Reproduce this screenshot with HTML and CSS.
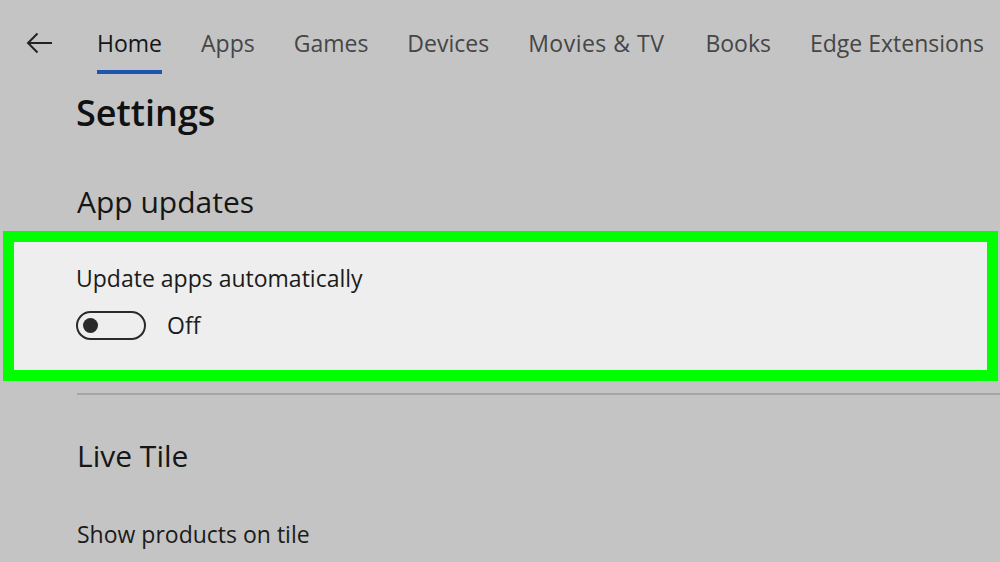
FILE: index.html
```html
<!DOCTYPE html>
<html>
<head>
<meta charset="utf-8">
<link rel="stylesheet" href="styles.css">
</head>
<body>
<nav class="topnav">
  <span class="back">
    <svg width="27" height="22" viewBox="0 0 27 22"><path d="M26 11H2M11.5 1.5L2 11l9.5 9.5" fill="none" stroke="#222" stroke-width="2"/></svg>
  </span>
  <a class="tab active">Home</a>
  <a class="tab">Apps</a>
  <a class="tab">Games</a>
  <a class="tab">Devices</a>
  <a class="tab wide">Movies &amp; TV</a>
  <a class="tab">Books</a>
  <a class="tab">Edge Extensions</a>
</nav>
<main class="content">
  <h1 class="title">Settings</h1>
  <h2 class="section">App updates</h2>
  <div class="highlight">
    <div class="label">Update apps automatically</div>
    <div class="toggle-row">
      <span class="toggle"><span class="knob"></span></span>
      <span class="state">Off</span>
    </div>
  </div>
  <hr class="divider">
  <h2 class="section live">Live Tile</h2>
  <div class="label plain">Show products on tile</div>
</main>
</body>
</html>
```
FILE: styles.css
```css
html, body { margin: 0; padding: 0; }
body {
  width: 1000px;
  height: 562px;
  overflow: hidden;
  background: #c4c4c4;
  font-family: "Open Sans", "Noto Sans", sans-serif;
  color: #1b1b1b;
}
.topnav {
  display: flex;
  align-items: flex-start;
  height: 89px;
  padding: 27px 0 0 26px;
  box-sizing: border-box;
}
.back { display: flex; width: 27px; margin: 5px 44px 0 0; }
.tab {
  position: relative;
  font-size: 23px;
  line-height: 32px;
  color: #464646;
  margin-right: 39px;
  white-space: nowrap;
}
.tab.wide { letter-spacing: 0.5px; margin-right: 41px; }
.tab.active { color: #161616; }
.tab.active::after {
  content: "";
  position: absolute;
  left: 0; right: 0;
  bottom: -15px;
  height: 4px;
  background: #1d56b0;
}
.title {
  margin: 0 0 0 76px;
  font-size: 36px;
  font-weight: 600;
  line-height: 48px;
  color: #111;
}
.section {
  margin: 45px 0 0 77px;
  font-size: 30px;
  font-weight: 400;
  line-height: 40px;
  color: #161616;
}
.highlight {
  margin: 9px 2px 0 3px;
  border: 11px solid #00ff00;
  background: #eeeeee;
  height: 128px;
  padding: 0 0 0 62px;
}
.label {
  font-size: 23px;
  line-height: 30px;
  padding-top: 21px;
}
.toggle-row { display: flex; align-items: center; margin-top: 17px; }
.toggle {
  width: 61px;
  height: 25px;
  border: 2.5px solid #2a2a2a;
  border-radius: 16px;
  display: flex;
  align-items: center;
  padding-left: 5px;
}
.knob { width: 15px; height: 15px; border-radius: 50%; background: #2a2a2a; }
.state { font-size: 23px; margin-left: 21px; line-height: 30px; }
.divider {
  margin: 12px 0 0 77px;
  border: 0;
  border-top: 2px solid #a6a6a6;
  height: 0;
}
.live { margin-top: 41px; }
.label.plain { margin-left: 77px; padding-top: 43px; }
```
